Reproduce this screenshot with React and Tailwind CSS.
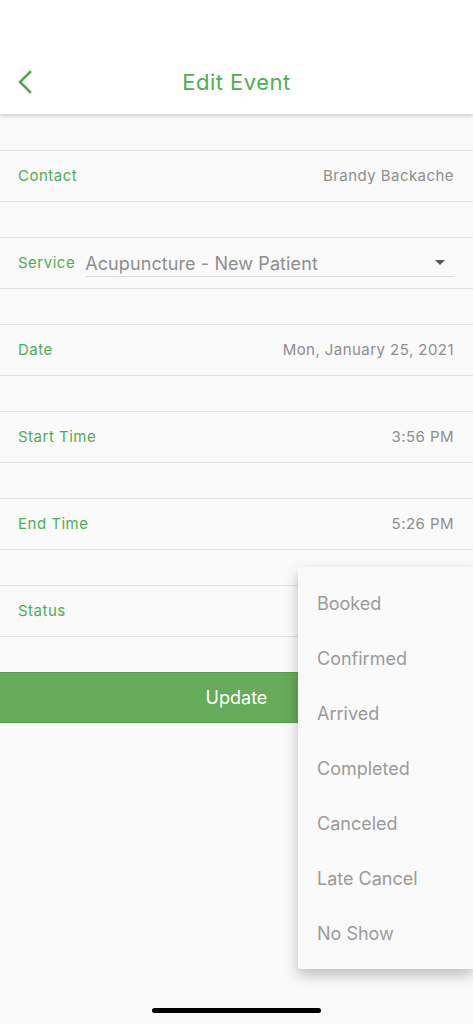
import React from "react";

const font = { fontFamily: "Inter, 'Noto Sans', sans-serif" };

function Row({ label, value, first }) {
  return (
    <div className={first ? "mt-[36px]" : "mt-[35px]"}>
      <div className="h-[52px] border-y border-[#e3e3e3] pl-[18px] pr-[19px] flex items-center justify-between">
        <span className="text-[15px] tracking-[0.5px] text-[#4caf50]">{label}</span>
        <span className="text-[15px] tracking-[0.45px] text-[#8e8e8e]">{value}</span>
      </div>
    </div>
  );
}

export default function App() {
  const items = ["Booked", "Confirmed", "Arrived", "Completed", "Canceled", "Late Cancel", "No Show"];
  return (
    <div className="relative w-[473px] h-[1024px] bg-[#fafafa] overflow-hidden" style={font}>
      <div className="h-[114px] bg-white shadow-[0_2px_4px_rgba(0,0,0,0.18)] relative z-10 flex flex-col justify-end">
        <div className="h-[64px] relative flex items-center justify-center">
          <svg className="absolute left-[17px] top-[20px]" width="16" height="24" viewBox="0 0 16 24" fill="none">
            <path d="M13 2 L3 12 L13 22" stroke="#55a64c" strokeWidth="2.6" strokeLinecap="square" />
          </svg>
          <span className="text-[22px] text-[#4caf50] tracking-[0.5px]">Edit Event</span>
        </div>
      </div>

      <Row first label="Contact" value="Brandy Backache" />

      <div className="mt-[35px]">
        <div className="h-[52px] border-y border-[#e3e3e3] pl-[18px] pr-[19px] flex items-center">
          <span className="text-[15px] tracking-[0.5px] text-[#4caf50] mr-[10px]">Service</span>
          <div className="flex-1 h-[27px] border-b border-[#dadada] flex items-center justify-between mt-[1px]">
            <span className="text-[18px] tracking-[0.1px] text-[#8e8e8e]">Acupuncture - New Patient</span>
            <svg width="10" height="6" viewBox="0 0 10 6" className="mr-[9px]">
              <path d="M0 0 L10 0 L5 5 Z" fill="#555" />
            </svg>
          </div>
        </div>
      </div>

      <Row label="Date" value="Mon, January 25, 2021" />
      <Row label="Start Time" value="3:56 PM" />
      <Row label="End Time" value="5:26 PM" />
      <Row label="Status" value="" />

      <div className="mt-[35px]">
        <div className="h-[51px] bg-[#66ab5a] border-y border-[#4fa444] flex items-center justify-center">
          <span className="text-[18px] text-white">Update</span>
        </div>
      </div>

      <div className="absolute left-[298px] top-[567px] w-[175px] h-[402px] bg-[#fafafa] rounded-l-[3px] shadow-[0_6px_14px_rgba(0,0,0,0.25)] pt-[9px] pb-[8px] z-20">
        {items.map((it) => (
          <div key={it} className="h-[55px] flex items-center pl-[19px]">
            <span className="text-[18px] text-[#9a9a9a]">{it}</span>
          </div>
        ))}
      </div>

      <div className="absolute left-[152px] top-[1008px] w-[169px] h-[5px] rounded-full bg-black" />
    </div>
  );
}
